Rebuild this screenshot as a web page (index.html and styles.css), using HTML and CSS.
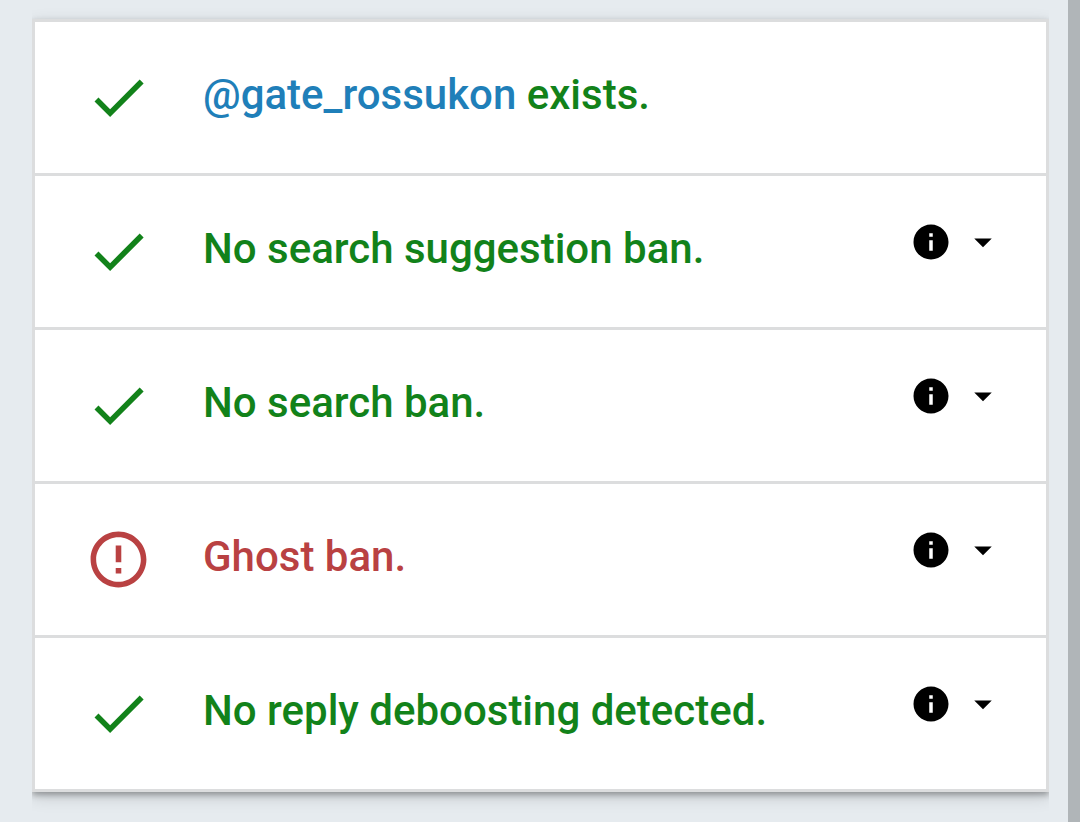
FILE: index.html
```html
<!DOCTYPE html>
<html lang="en">
<head>
  <meta charset="UTF-8">
  <meta name="viewport" content="width=device-width, initial-scale=1.0">
  <title>Account check</title>
  <link rel="stylesheet" href="styles.css">
</head>
<body>

  <!-- shared icons -->
  <svg class="sprite" aria-hidden="true">
    <symbol id="check" viewBox="0 0 24 24">
      <path d="M9 16.17L4.83 12l-1.42 1.41L9 19 21 7l-1.41-1.41z"/>
    </symbol>
    <symbol id="error" viewBox="0 0 24 24">
      <path d="M11 15h2v2h-2zm0-8h2v6h-2zm.99-5C6.47 2 2 6.48 2 12s4.47 10 9.99 10C17.52 22 22 17.52 22 12S17.52 2 11.99 2zM12 20c-4.42 0-8-3.58-8-8s3.58-8 8-8 8 3.58 8 8-3.58 8-8 8z"/>
    </symbol>
    <symbol id="info" viewBox="0 0 24 24">
      <path d="M12 2C6.48 2 2 6.48 2 12s4.48 10 10 10 10-4.48 10-10S17.52 2 12 2zm1 15h-2v-6h2v6zm0-8h-2V7h2v2z"/>
    </symbol>
    <symbol id="caret" viewBox="0 0 24 24">
      <path d="M7 10l5 5 5-5z"/>
    </symbol>
  </svg>

  <main>
    <ul class="results">
      <li class="result ok">
        <svg class="status"><use href="#check"/></svg>
        <p class="title"><a href="#">@gate_rossukon</a> exists.</p>
      </li>
      <li class="result ok">
        <svg class="status"><use href="#check"/></svg>
        <p class="title">No search suggestion ban.</p>
        <button class="more" type="button" aria-label="About search suggestion ban">
          <svg><use href="#info"/></svg>
          <svg><use href="#caret"/></svg>
        </button>
      </li>
      <li class="result ok">
        <svg class="status"><use href="#check"/></svg>
        <p class="title">No search ban.</p>
        <button class="more" type="button" aria-label="About search ban">
          <svg><use href="#info"/></svg>
          <svg><use href="#caret"/></svg>
        </button>
      </li>
      <li class="result fail">
        <svg class="status"><use href="#error"/></svg>
        <p class="title">Ghost ban.</p>
        <button class="more" type="button" aria-label="About ghost ban">
          <svg><use href="#info"/></svg>
          <svg><use href="#caret"/></svg>
        </button>
      </li>
      <li class="result ok">
        <svg class="status"><use href="#check"/></svg>
        <p class="title">No reply deboosting detected.</p>
        <button class="more" type="button" aria-label="About reply deboosting">
          <svg><use href="#info"/></svg>
          <svg><use href="#caret"/></svg>
        </button>
      </li>
    </ul>
  </main>
  <div class="scrollbar"></div>

</body>
</html>
```
FILE: styles.css
```css
* {
  box-sizing: border-box;
  margin: 0;
  padding: 0;
}

body {
  display: flex;
  min-height: 100vh;
  font-family: Roboto, sans-serif;
  background-color: #e6ebef;
}

.sprite {
  display: none;
}

main {
  flex: 1;
  padding: 19px 19px 19px 32px;
}

.scrollbar {
  width: 12px;
  background-color: #b0b5b8;
}

/* RESULTS */
.results {
  list-style: none;
  background-color: #fff;
  border: 3px solid #dcddde;
  box-shadow: 0 3px 6px rgba(0, 0, 0, 0.3), 0 5px 16px rgba(0, 0, 0, 0.14);
  /* keep the shadow above and below only */
  clip-path: inset(-30px 0);
}

.result {
  display: flex;
  align-items: flex-start;
  min-height: 154px;
  padding: 42px 42px 42px 50px;
  border-bottom: 3px solid #dcddde;
}

.result:last-child {
  min-height: 151px;
  border-bottom: none;
}

.status {
  width: 67px;
  height: 67px;
  fill: currentColor;
}

.title {
  flex: 1;
  margin-left: 51px;
  font-size: 42px;
  font-weight: 500;
  line-height: 62px;
}

.title a {
  color: #1f7fb9;
  text-decoration: none;
}

.ok {
  color: #12821a;
}

.fail {
  color: #b94142;
}

/* INFO BUTTON */
.more {
  display: flex;
  gap: 10px;
  margin-top: 3px;
  border: none;
  background: none;
  color: #000;
  cursor: pointer;
}

.more svg {
  width: 42px;
  height: 42px;
  fill: currentColor;
}
```
